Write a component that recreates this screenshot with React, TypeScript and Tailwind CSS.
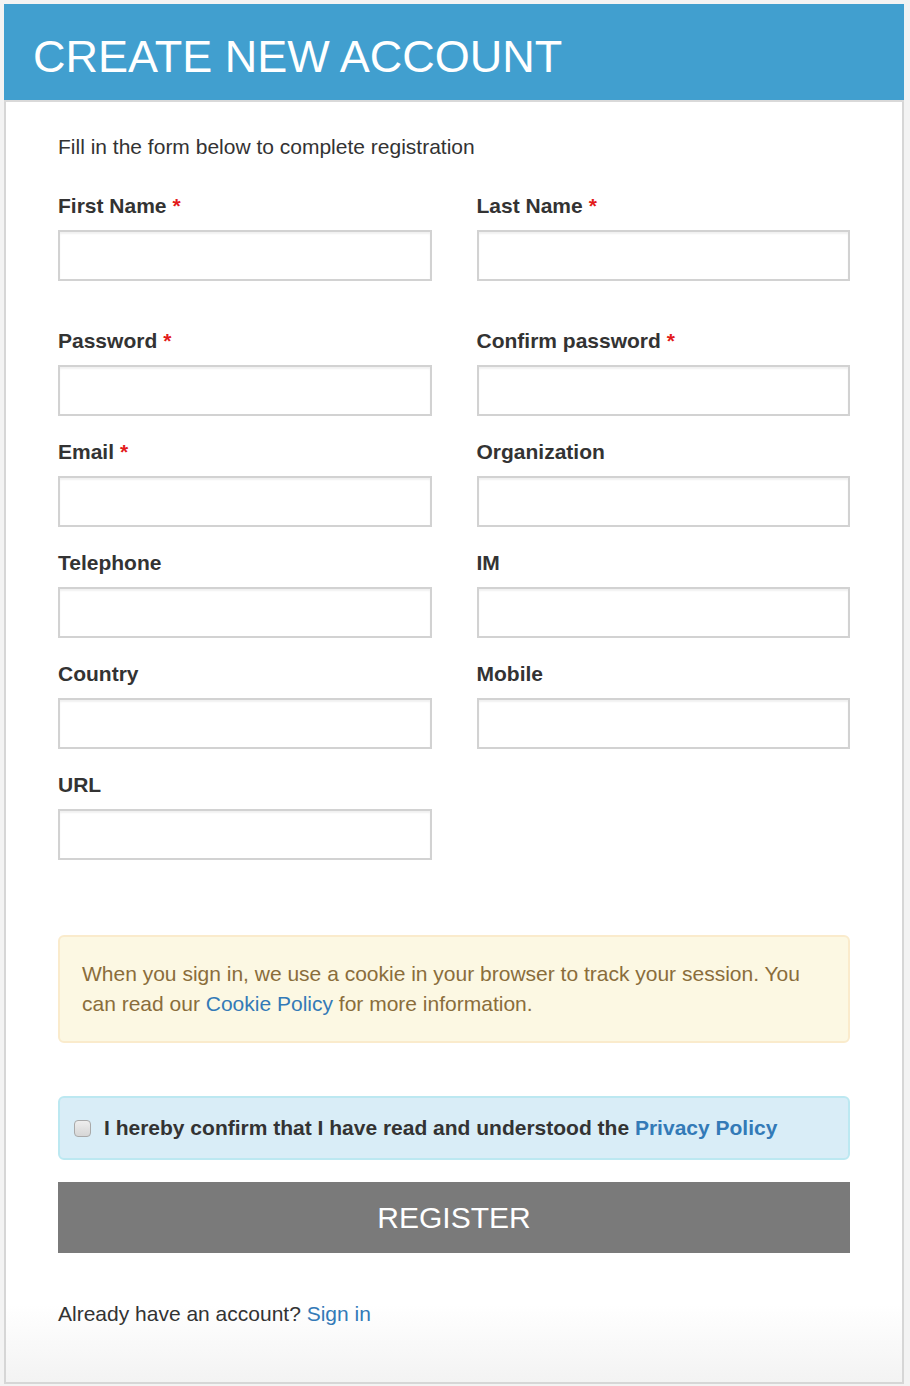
import React from 'react';

const font = { fontFamily: '"Liberation Sans", Arial, Helvetica, sans-serif' };

function Field({ label, required }: { label: string; required?: boolean }) {
  return (
    <div>
      <label className="block text-[21px] leading-[30px] font-bold text-[#333] mb-[9px]">
        {label}
        {required && <span className="text-[#e31b1b] ml-[6px]">*</span>}
      </label>
      <input
        type="text"
        className="block w-full h-[51px] border-2 border-[#d2d2d2] bg-white shadow-[inset_0_2px_2px_rgba(0,0,0,0.06)] px-3 text-[21px] focus:outline-none"
      />
    </div>
  );
}

export default function App() {
  return (
    <div className="min-h-screen bg-[#f3f3f3] p-[4px]" style={font}>
      <div className="w-[900px]">
        <header className="h-[98px] bg-[#419fcf] border-b-2 border-[#d9d9d9] flex items-center pl-[29px] pt-[8px]">
          <h1 className="text-[45px] leading-none text-white font-normal">CREATE NEW ACCOUNT</h1>
        </header>

        <div className="border-x-2 border-b-2 border-[#d6d6d6] bg-white">
          <form className="px-[52px] pt-[30px]" onSubmit={(e) => e.preventDefault()}>
            <p className="text-[21px] leading-[30px] text-[#333] mb-[29px]">
              Fill in the form below to complete registration
            </p>

            <div className="grid grid-cols-2 gap-x-[45px] gap-y-[21px]">
              <Field label="First Name" required />
              <Field label="Last Name" required />
              <div className="col-span-2 h-[24px] -mt-[21px]" />
              <Field label="Password" required />
              <Field label="Confirm password" required />
              <Field label="Email" required />
              <Field label="Organization" />
              <Field label="Telephone" />
              <Field label="IM" />
              <Field label="Country" />
              <Field label="Mobile" />
              <Field label="URL" />
            </div>

            <div className="mt-[75px] rounded-[6px] border-2 border-[#faebcc] bg-[#fcf8e3] px-[22px] py-[22px] text-[21px] leading-[30px] text-[#8a6d3b]">
              When you sign in, we use a cookie in your browser to track your session. You can read our{' '}
              <a href="#" className="text-[#337ab7]">Cookie Policy</a> for more information.
            </div>

            <div className="mt-[53px] rounded-[6px] border-2 border-[#bce8f1] bg-[#d9edf7] px-[14px] py-[15px] flex items-center gap-[13px]">
              <span className="w-[17px] h-[17px] rounded-[4px] border border-[#a9a9a9] bg-linear-to-b from-[#eeeeee] to-[#d6d6d6] shrink-0" />
              <span className="text-[21px] leading-[30px] font-bold text-[#333]">
                I hereby confirm that I have read and understood the{' '}
                <a href="#" className="text-[#337ab7]">Privacy Policy</a>
              </span>
            </div>

            <button
              type="submit"
              className="mt-[22px] w-full h-[71px] bg-[#7a7a7a] text-white text-[30px] leading-none"
            >
              REGISTER
            </button>
          </form>

          <div className="px-[52px] pt-[46px] pb-[53px] bg-linear-to-b from-white from-40% to-[#f3f3f3] text-[21px] leading-[30px] text-[#333]">
            Already have an account? <a href="#" className="text-[#337ab7]">Sign in</a>
          </div>
        </div>
      </div>
    </div>
  );
}
